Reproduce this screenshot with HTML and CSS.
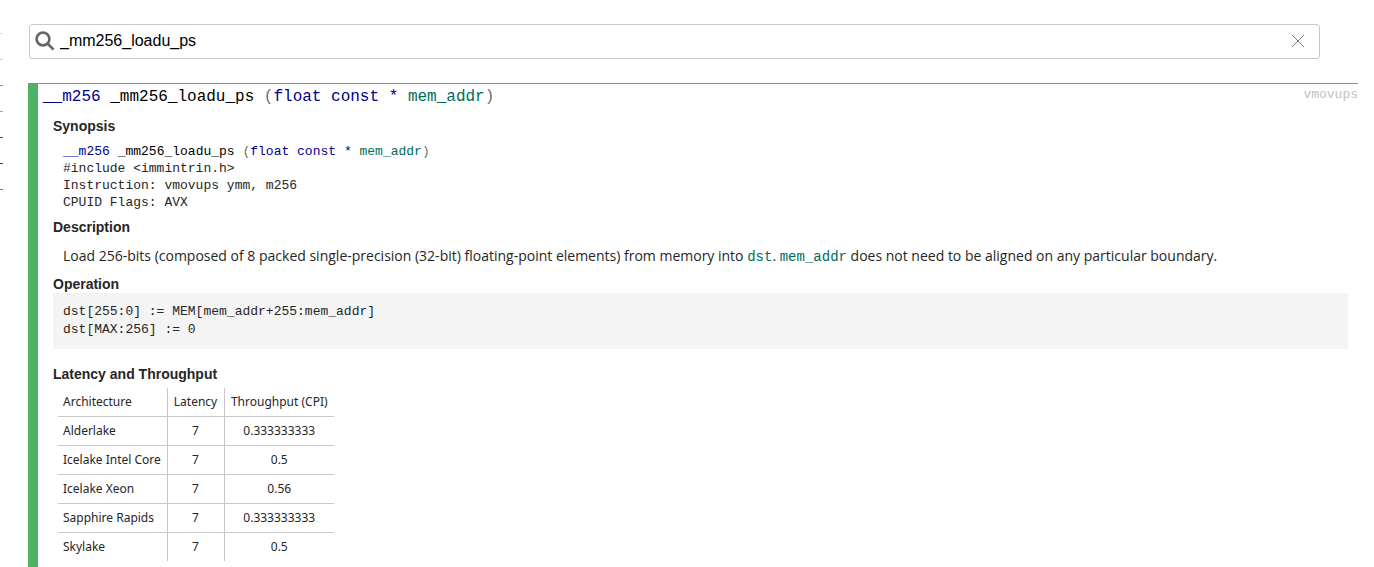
FILE: index.html
```html
<!DOCTYPE html>
<html lang="en">
<head>
<meta charset="utf-8">
<title>Intrinsics Guide</title>
<link rel="stylesheet" href="styles.css">
</head>
<body>
<div class="page">
  <aside class="families">
    <div class="family mmx"></div>
    <div class="family sse"></div>
    <div class="family avx"></div>
    <div class="family avx512"></div>
    <div class="family amx"></div>
    <div class="family svml"></div>
    <div class="family other"></div>
  </aside>
  <main class="content">
    <form class="search">
      <svg class="search-icon" viewBox="0 0 20 20" aria-hidden="true"><circle cx="8" cy="8" r="6.4"/><path d="M12.5 12.5L18.6 18.6"/></svg>
      <input class="search-input" type="text" aria-label="Search intrinsics" value="_mm256_loadu_ps">
      <button class="clear" type="button" aria-label="Clear"><svg class="clear-icon" viewBox="0 0 14 14" aria-hidden="true"><path d="M1 1L13 13M13 1L1 13"/></svg></button>
    </form>
    <article class="intrinsic">
      <header class="head">
        <div class="signature"><span class="type">__m256</span> <span class="name">_mm256_loadu_ps</span> (<span class="type">float const *</span> <span class="param">mem_addr</span>)</div>
        <div class="instruction">vmovups</div>
      </header>
      <div class="details">
        <h2 class="title">Synopsis</h2>
        <div class="synopsis">
          <div class="line"><span class="sig"><span class="type">__m256</span> <span class="name">_mm256_loadu_ps</span> (<span class="type">float const *</span> <span class="param">mem_addr</span>)</span></div>
          <div class="line">#include &lt;immintrin.h&gt;</div>
          <div class="line">Instruction: vmovups ymm, m256</div>
          <div class="line">CPUID Flags: AVX</div>
        </div>
        <h2 class="title">Description</h2>
        <p class="description">Load 256-bits (composed of 8 packed single-precision (32-bit) floating-point elements) from memory into <code class="param">dst</code>. <code class="param">mem_addr</code> does not need to be aligned on any particular boundary.</p>
        <h2 class="title">Operation</h2>
        <pre class="operation">dst[255:0] := MEM[mem_addr+255:mem_addr]
dst[MAX:256] := 0
</pre>
        <h2 class="title">Latency and Throughput</h2>
        <table class="perf">
          <colgroup><col class="col-arch"><col class="col-latency"><col class="col-cpi"></colgroup>
          <thead><tr><th>Architecture</th><th>Latency</th><th>Throughput (CPI)</th></tr></thead>
          <tbody>
            <tr><td>Alderlake</td><td>7</td><td>0.333333333</td></tr>
            <tr><td>Icelake Intel Core</td><td>7</td><td>0.5</td></tr>
            <tr><td>Icelake Xeon</td><td>7</td><td>0.56</td></tr>
            <tr><td>Sapphire Rapids</td><td>7</td><td>0.333333333</td></tr>
            <tr><td>Skylake</td><td>7</td><td>0.5</td></tr>
          </tbody>
        </table>
      </div>
    </article>
  </main>
</div>
</body>
</html>
```
FILE: styles.css
```css
* { box-sizing: border-box; }
html { overflow: hidden; }
body {
  margin: 0;
  background: #fff;
  color: #262626;
  font: 14px/20px "Open Sans", "Noto Sans", sans-serif;
}
.page { display: flex; }
.families { flex: none; width: 3px; padding-top: 33px; }
.family { height: 26px; border-top: 1px solid; }
.mmx { border-color: #ffe94d; }
.sse { border-color: #d0d6a0; }
.avx { border-color: #4fb264; }
.avx512 { border-color: #73b0de; }
.amx { border-color: #7d2a7a; }
.svml { border-color: #e3000f; }
.other { border-color: #777; }
.content { flex: 1; min-width: 0; padding: 24px 16px 0 25px; }

.search {
  display: flex;
  align-items: center;
  height: 35px;
  margin: 0 38px 24px 1px;
  padding: 0 14px 2px 5px;
  border: 1px solid #c8c8c8;
  border-radius: 3px;
}
.search-icon {
  width: 20px;
  height: 20px;
  fill: none;
  stroke: #666;
  stroke-width: 2.6;
}
.search-input {
  flex: 1;
  min-width: 0;
  padding: 0 0 0 5px;
  border: 0;
  outline: 0;
  background: none;
  color: #000;
  font: 16px/20px "Liberation Sans", Arial, sans-serif;
}
.clear { display: flex; padding: 0; border: 0; background: none; }
.clear-icon { width: 14px; height: 14px; fill: none; stroke: #777; }

.intrinsic {
  border-top: 1px solid #4fb264;
  border-left: 10px solid #4fb264;
}
.head { display: flex; justify-content: space-between; padding-left: 5px; }
.signature, .instruction, .synopsis, .operation {
  font-family: "Liberation Mono", "Courier New", monospace;
}
.signature { color: #6e6e6e; font-size: 16px; line-height: 26px; }
.instruction { color: #bfbfbf; font-size: 13px; line-height: 22px; }
.type { color: #00008b; }
.name { color: #000; }
.param { color: #006b5b; }

.details { padding: 7px 10px 16px 15px; }
.title {
  margin: 0;
  font: bold 14px/18px "Liberation Sans", Arial, sans-serif;
}
.synopsis { padding: 8px 10px 7px; font-size: 13px; line-height: 17px; }
.sig { color: #6e6e6e; }
.description { margin: 0; padding: 10px 10px 8px; }
.description code { font: 14px/20px "Liberation Mono", "Courier New", monospace; }
.operation {
  margin: 0 0 16px;
  padding: 10px;
  background: #f4f4f4;
  font-size: 13px;
  line-height: 18px;
}
.perf {
  margin: 5px 0 0 5px;
  border-collapse: collapse;
  font: 12px/18px "Noto Sans", sans-serif;
}
.col-arch { width: 109px; }
.col-latency { width: 57px; }
.col-cpi { width: 110px; }
.perf th, .perf td { padding: 5px; font-weight: normal; text-align: center; }
.perf tr > * + * { border-left: 1px solid #c8c8c8; }
.perf tr > :first-child { text-align: left; }
.perf td { border-top: 1px solid #c8c8c8; }
```
